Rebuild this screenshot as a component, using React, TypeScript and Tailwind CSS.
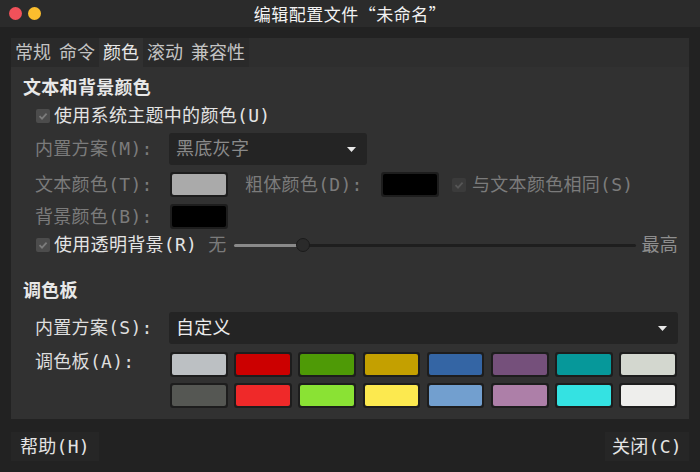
const FONT = { fontFamily: '"DejaVu Sans Mono", "Noto Sans CJK SC", monospace' };
const TITLE_FONT = { fontFamily: '"Noto Sans CJK SC", "Noto Sans", sans-serif' };

const palette = [
  ["#bcc0c3", "#cc0000", "#4e9a06", "#c4a000", "#3465a4", "#75507b", "#06989a", "#d3d7cf"],
  ["#555753", "#ef2929", "#8ae234", "#fce94f", "#729fcf", "#ad7fa8", "#34e2e2", "#eeeeec"],
];

const tabs = ["常规", "命令", "颜色", "滚动", "兼容性"];

const Check = ({ dim }: { dim?: boolean }) => (
  <span
    className={`flex h-[14px] w-[14px] shrink-0 items-center justify-center rounded-[2px] ${
      dim ? "bg-[#3b3b3b]" : "bg-[#4c4c4c]"
    }`}
  >
    <svg width="10" height="10" viewBox="0 0 10 10">
      <path
        d="M1.5 5.2 L4 7.6 L8.6 2.6"
        fill="none"
        stroke={dim ? "#565656" : "#7c7c7c"}
        strokeWidth="1.8"
      />
    </svg>
  </span>
);

const Swatch = ({ color, className = "" }: { color: string; className?: string }) => (
  <div className={`h-[25px] rounded-[3px] bg-[#1d1d1d] p-[2px] ${className}`}>
    <div className="h-full w-full rounded-[2px]" style={{ backgroundColor: color }} />
  </div>
);

const Arrow = () => (
  <svg width="9" height="5" viewBox="0 0 9 5">
    <path d="M0 0 H9 L4.5 5 Z" fill="#e8e8e8" />
  </svg>
);

export default function App() {
  return (
    <div className="flex h-[472px] w-[700px] flex-col bg-[#222222] text-[18px] tracking-[0.3px]" style={FONT}>
      {/* title bar */}
      <div className="relative flex h-[27px] shrink-0 items-center justify-center bg-[#2b2b2b]" style={TITLE_FONT}>
        <div className="absolute left-[9px] top-[7px] flex gap-[6px]">
          <span className="h-[13px] w-[13px] rounded-full bg-[#f1515a]" />
          <span className="h-[13px] w-[13px] rounded-full bg-[#fbbe2e]" />
        </div>
        <span className="text-[17px] leading-none tracking-[0.5px] text-[#f2f2f2]">编辑配置文件“未命名”</span>
      </div>

      <div className="flex flex-1 flex-col px-[11px] pt-[11px]">
        {/* tabs */}
        <div className="flex h-[29px] bg-[#2e2e2e] leading-none tracking-normal">
          <div className="flex bg-[#2a2a2a]">
            {tabs.map((t) => (
              <div
                key={t}
                className={`flex items-center px-[4px] ${
                  t === "颜色" ? "bg-[#313131] text-[#e8e8e8]" : "text-[#c4c4c4]"
                }`}
              >
                {t}
              </div>
            ))}
          </div>
        </div>

        {/* panel */}
        <div className="flex flex-col bg-[#313131] pb-[11px] pl-[12px] pr-[11px] pt-[9px] leading-none">
          <div className="flex h-[24px] items-center font-bold text-[#e8e8e8]">文本和背景颜色</div>

          <div className="ml-[13px] mt-[4px] flex h-[24px] items-center gap-[4px] text-[#e4e4e4]">
            <Check />
            <span>使用系统主题中的颜色(U)</span>
          </div>

          <div className="ml-[12px] mt-[5px] flex h-[32px] items-center">
            <span className="w-[134px] text-[#7b7b7b]">内置方案(M):</span>
            <div className="flex h-full w-[198px] items-center justify-between rounded-[3px] bg-[#242424] pl-[7px] pr-[11px] text-[#8a8a8a]">
              <span>黑底灰字</span>
              <Arrow />
            </div>
          </div>

          <div className="ml-[12px] mt-[7px] flex h-[25px] items-center">
            <span className="w-[135px] text-[#7b7b7b]">文本颜色(T):</span>
            <Swatch color="#aaaaaa" className="w-[58px]" />
            <span className="ml-[17px] w-[136px] text-[#7b7b7b]">粗体颜色(D):</span>
            <Swatch color="#000000" className="w-[58px]" />
            <div className="ml-[13px] flex items-center gap-[6px] text-[#7b7b7b]">
              <Check dim />
              <span>与文本颜色相同(S)</span>
            </div>
          </div>

          <div className="ml-[12px] mt-[7px] flex h-[25px] items-center">
            <span className="w-[135px] text-[#7b7b7b]">背景颜色(B):</span>
            <Swatch color="#000000" className="w-[58px]" />
          </div>

          <div className="ml-[13px] mt-[4px] flex h-[24px] items-center">
            <Check />
            <span className="ml-[4px] text-[#e4e4e4]">使用透明背景(R)</span>
            <span className="ml-[11px] text-[#7b7b7b]">无</span>
            <div className="relative ml-[7px] flex h-[14px] flex-1 items-center">
              <div className="h-[3px] w-[69px] rounded-l-full bg-[#8a8a8a]" />
              <div className="h-[3px] flex-1 rounded-r-full bg-[#1e1e1e]" />
              <span className="absolute left-[62px] top-0 h-[14px] w-[14px] rounded-full border border-[#1b1b1b] bg-[#2a2a2a]" />
            </div>
            <span className="ml-[5px] text-[#8e8e8e]">最高</span>
          </div>

          <div className="mt-[22px] flex h-[24px] items-center font-bold text-[#e8e8e8]">调色板</div>

          <div className="ml-[12px] mt-[9px] flex h-[32px] items-center">
            <span className="w-[134px] text-[#dedede]">内置方案(S):</span>
            <div className="flex h-full flex-1 items-center justify-between rounded-[3px] bg-[#242424] pl-[7px] pr-[11px] text-[#ececec]">
              <span>自定义</span>
              <Arrow />
            </div>
          </div>

          <div className="ml-[12px] mt-[8px] flex">
            <span className="mt-[1px] w-[135px] text-[#dedede]">调色板(A):</span>
            <div className="flex flex-1 flex-col gap-[6px] pr-[1px]">
              {palette.map((row, i) => (
                <div key={i} className="grid grid-cols-8 gap-[6.5px]">
                  {row.map((c) => (
                    <Swatch key={c} color={c} />
                  ))}
                </div>
              ))}
            </div>
          </div>
        </div>

        {/* footer */}
        <div className="mt-[13px] flex justify-between leading-none">
          <div className="flex h-[29px] items-center bg-[#262626] px-[9px] text-[#e4e4e4]">帮助(H)</div>
          <div className="flex h-[29px] items-center bg-[#262626] px-[7px] text-[#e4e4e4]">关闭(C)</div>
        </div>
      </div>
    </div>
  );
}
